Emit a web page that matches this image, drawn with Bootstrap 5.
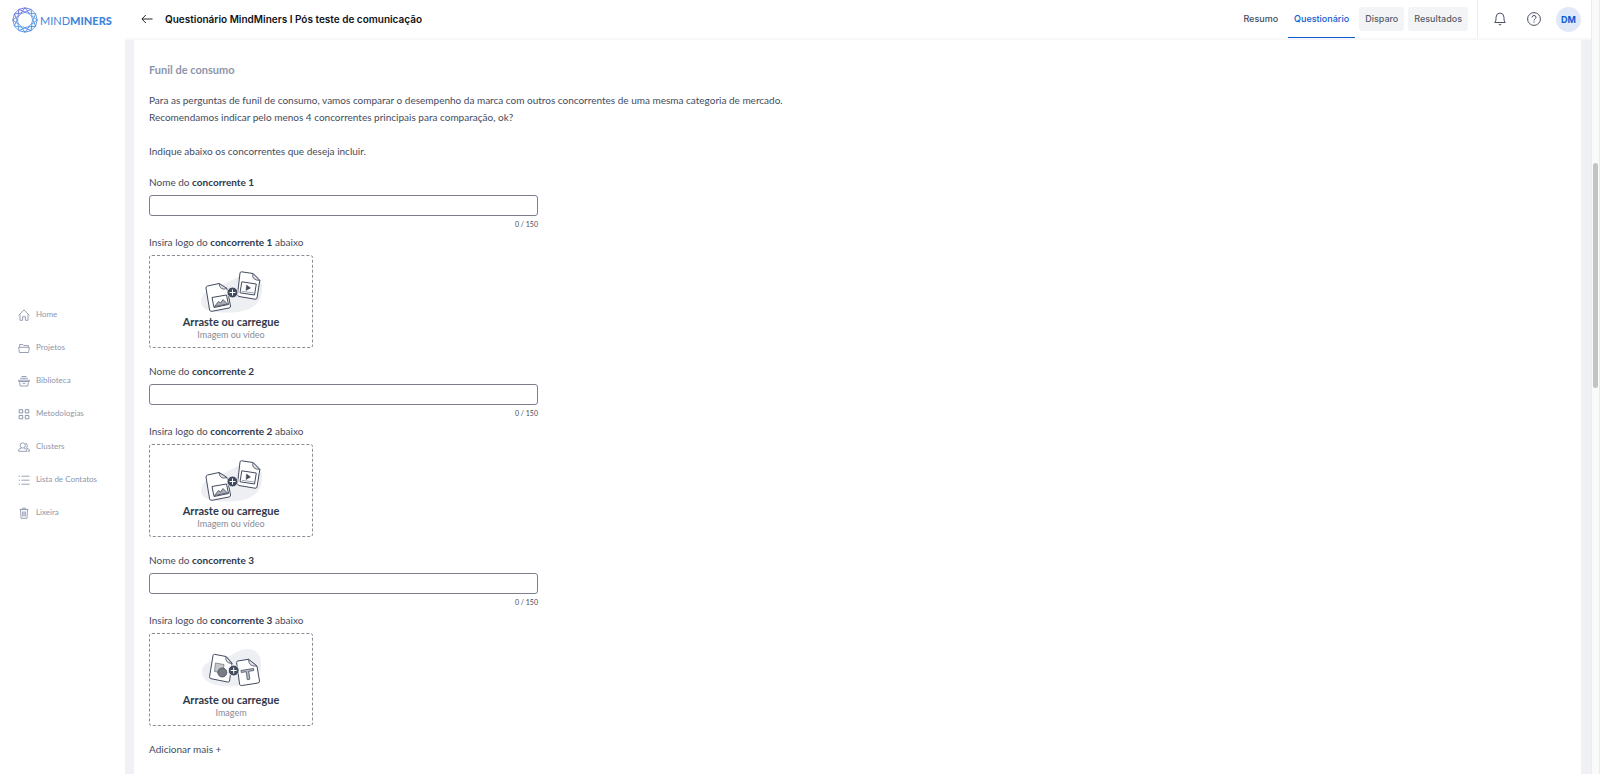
<!DOCTYPE html>
<html lang="pt-BR">
<head>
<meta charset="utf-8">
<meta name="viewport" content="width=device-width, initial-scale=1">
<title>Questionário MindMiners</title>
<link href="https://cdn.jsdelivr.net/npm/bootstrap@5.3.0/dist/css/bootstrap.min.css" rel="stylesheet">
<style>
  :root { --ink: #434b5e; --ink-strong: #2f384d; --soft: #8c96ab; --accent: #0d5bd1; --back: #f0f1f4; }
  body { font-family: Lato, sans-serif; font-size: 10px; line-height: 17px; color: var(--ink); background: var(--back); }
  a { text-decoration: none; }
  svg { display: block; flex: none; }
  .side { width: 125px; background: #fff; }
  .brand { height: 40px; padding-left: 12px; gap: 2px; font-size: 11px; color: #3f86dc; }
  .brand .thin { font-weight: 400; }
  .brand .thick { font-weight: 900; }
  .side-links { gap: 16px; padding: 12px 0 0 18px; }
  .side-links a { gap: 6px; font-size: 8px; color: var(--soft); }
  .side-links svg { width: 12px; height: 12px; }
  .topbar { height: 40px; background: #fff; border-bottom: 2px solid #f7f7f9; font-family: Inter, sans-serif; }
  .topbar h1 { font-size: 10px; line-height: 16px; font-weight: 600; color: #10131a; }
  .tabs { gap: 4px; padding-right: 9px; font-size: 9px; font-weight: 500; }
  .tabs a { padding: 0 6px; line-height: 24px; border-radius: 3px; color: var(--ink); }
  .tabs a.off { background: #f3f4f6; color: #565d6b; }
  .tabs a.on { line-height: 36px; border-bottom: 1px solid var(--accent); color: var(--accent); border-radius: 0; }
  .tools { border-left: 1px solid #ebedf0; padding: 0 10px 0 15px; }
  .tools button { background: none; border: 0; padding: 0; color: #4a5163; }
  .tools .help { margin: 0 15px 0 20px; }
  .tools .avatar { width: 25px; height: 25px; border-radius: 50%; background: #e1e9f8; color: var(--accent); font-size: 9px; font-weight: 700; }
  .sheet { margin: 0 10px 0 9px; padding: 21px 15px 18px; background: #fff; }
  .sheet h2 { font-size: 11px; line-height: 17px; font-weight: 700; color: var(--soft); margin-bottom: 14px; }
  .sheet p { margin: 0 0 17px; }
  .sheet .last-line { margin-bottom: 14px; }
  .sheet b { color: var(--ink-strong); }
  .entry { margin-bottom: 15px; }
  .entry-name label, .field-label { display: block; line-height: 16px; }
  .entry-name { width: 389px; max-width: 100%; }
  .entry-name .form-control { height: 21px; min-height: 0; margin-top: 5px; padding: 0 6px; font-size: 10px; border: 1px solid #7b7f8c; border-radius: 3px; }
  .counter { margin: 2px 0 4px; font-size: 7px; line-height: 12px; text-align: right; }
  .drop { width: 164px; height: 93px; margin-top: 5px; padding-top: 15px; border: 1px dashed #8a8d97; border-radius: 3px; cursor: pointer; }
  .drop strong { margin-top: 2px; line-height: 14px; font-size: 11px; color: var(--ink-strong); }
  .drop span { line-height: 12px; font-size: 9px; color: #858b99; }
  .more { display: block; background: none; border: 0; padding: 0; line-height: 16px; color: var(--ink); }
  .rail { width: 9px; background: #fafafa; border-left: 1px solid #ececec; border-right: 1px solid #ececec; }
  .rail-thumb { position: absolute; top: 21%; left: 1px; width: 5px; height: 29%; border-radius: 3px; background: #c3c3c3; }
</style>
</head>
<body>
<svg width="0" height="0" class="position-absolute" aria-hidden="true">
  <symbol id="art-media" viewBox="-1 0 62 42">
    <path d="M0 31C0 21 9 18 20 14 32 10 38 3 48 2 57 2 62 10 61 19 61 32 50 41 31 41.500 14 42 0 40 0 31Z" fill="#edeff3"/>
    <g fill="#fff" stroke="#434b5e" stroke-linejoin="round">
      <path d="M6.500 15 18 12.500 26 17.500 29.500 35Q29.700 36.500 28 37L11 40.300Q9 40.500 8.600 39L5 17Q5 15.500 6.500 15Z"/>
      <path d="M18 12.500Q19 20 26 17.500Z" fill="#dfe2e8" stroke-width=".8"/>
      <path d="M11 26.500 25.500 24 27.500 33.500 13 36.500Z"/>
      <path d="M13.500 35.500 17.500 30.500 19.500 32 22 28.500 26.500 33Z" fill="#a9adb5" stroke-width=".8"/>
      <path d="M40.500.800 52 2.500 58.800 9.500 56 27Q55.700 28.500 54 28.200L38 25.500Q36.300 25 36.500 23.500L39 2Q39.300.700 40.500.800Z"/>
      <path d="M52 2.500Q50 9 58.800 9.500Z" fill="#dfe2e8" stroke-width=".8"/>
      <path d="M40.800 10.800 55.300 13 53.500 24 39 21.800Z"/>
      <path d="M45.500 14 49.500 17 45 19.500Z" fill="#434b5e" stroke-width=".5"/>
      <path d="M41 20.300 53 22" stroke-width=".5"/>
    </g>
    <circle cx="31.500" cy="21.500" r="5.400" fill="#434b5e" stroke="#fff" stroke-width=".8"/>
    <path d="M28.500 21.500h6M31.500 18.500v6" stroke="#fff"/>
  </symbol>
  <symbol id="art-image" viewBox="-1 0 62 42">
    <path d="M1 22C1 15 8 12 21 10 32 7 36 0 47 0 57 0 61 9 60 18 59 31 46 37 28 37.500 11 37 1 32 1 22Z" fill="#edeff3"/>
    <g fill="#fff" stroke="#434b5e" stroke-linejoin="round">
      <path d="M13.500 5.300 25 7.500 31 14 28.500 32Q28.200 33.500 26.500 33L10 29.700Q8.300 29.300 8.600 27.500L12 6.500Q12.300 5.200 13.500 5.300Z"/>
      <path d="M25 7.500Q23.500 14 31 14.500Z" fill="#dfe2e8" stroke-width=".8"/>
      <path d="M14.500 14 23 15.500 22 24 13.500 22.500Z" fill="#c4c6ca" stroke="#777b84" stroke-width=".8"/>
      <circle cx="21.300" cy="23.500" r="4.500" fill="#777b82" stroke-width=".8"/>
      <path d="M36.800 12 47.500 10.300 56 17 58.500 32Q58.700 33.500 57 34L40.500 36.600Q39 36.700 38.600 35.200L35.600 13.500Q35.500 12.300 36.800 12Z"/>
      <path d="M47.500 10.300Q47.500 18 56 17Z" fill="#dfe2e8" stroke-width=".8"/>
      <path d="M40 21.500 52.500 19.500 52.800 21.500 47.700 22.300 48.800 30.200 46.300 30.600 45.200 22.700 40.300 23.500Z" fill="#b9bdc6" stroke-width=".8"/>
    </g>
    <circle cx="32.700" cy="21.500" r="5.400" fill="#434b5e" stroke="#fff" stroke-width=".8"/>
    <path d="M29.700 21.500h6M32.700 18.500v6" stroke="#fff"/>
  </symbol>
</svg>

<div class="d-flex min-vh-100">
  <aside class="side d-flex flex-column flex-shrink-0">
    <a href="#" class="brand d-flex align-items-center">
      <svg width="26" height="26" viewBox="0 0 26 26" fill="none" stroke="url(#g)" stroke-width=".9" aria-hidden="true">
        <defs><linearGradient id="g" gradientUnits="userSpaceOnUse" x1="4" y1="2" x2="20" y2="26"><stop stop-color="#6a5fd8"/><stop offset=".5" stop-color="#5a9be4"/><stop offset="1" stop-color="#3f7fe0"/></linearGradient></defs>
        <path d="M13 .800 19.100 2.400 23.600 6.900 25.200 13 23.600 19.100 19.100 23.600 13 25.200 6.900 23.600 2.400 19.100.800 13 2.400 6.900 6.900 2.400Z"/>
        <path d="M13 .800 17 6.100 23.600 6.900 21 13 23.600 19.100 17 19.900 13 25.200 9 19.900 2.400 19.100 5 13 2.400 6.900 9 6.100Z"/>
        <path d="M6.900 2.400 13 5 19.100 2.400 19.900 9 25.200 13 19.900 17 19.100 23.600 13 21 6.900 23.600 6.100 17 .800 13 6.100 9Z"/>
        <circle cx="13" cy="13" r="7.500"/>
      </svg>
      <span><span class="thin">MIND</span><span class="thick">MINERS</span></span>
    </a>
    <nav class="side-links d-flex flex-column flex-grow-1 justify-content-center" aria-label="Principal">
      <a href="#" class="d-flex align-items-center"><svg viewBox="0 0 12 12" fill="none" stroke="currentColor" stroke-width=".9"><path d="M.700 6.300 6 .900 11.300 6.300M2 5.300V11.300H4.600V7.700H7.400V11.300H10V5.300"/></svg>Home</a>
      <a href="#" class="d-flex align-items-center"><svg viewBox="0 0 12 12" fill="none" stroke="currentColor" stroke-width=".9"><path d="M1.600 5V2.500H4.800L5.800 3.600H10.400V5M.700 5.300H11.300L10.600 10.500H1.400Z"/></svg>Projetos</a>
      <a href="#" class="d-flex align-items-center"><svg viewBox="0 0 12 12" fill="none" stroke="currentColor" stroke-width=".9"><path d="M3.500 1.500H8.500M2.300 3.300H9.700M.700 5.200H11.300V6.500H.700ZM1.600 6.500 2.200 11H9.800L10.400 6.500M4.500 8.300H7.500"/></svg>Biblioteca</a>
      <a href="#" class="d-flex align-items-center"><svg viewBox="0 0 12 12" fill="none" stroke="currentColor"><path d="M1.200 1.700H4.700V5H1.200ZM7.300 1.700H10.800V5H7.300ZM1.200 7.500H4.700V10.800H1.200ZM7.300 7.500H10.800V10.800H7.300Z"/></svg>Metodologias</a>
      <a href="#" class="d-flex align-items-center"><svg viewBox="0 0 12 12" fill="none" stroke="currentColor" stroke-width=".9"><circle cx="4.700" cy="4.500" r="2.600"/><path d="M3.500 7 .700 8.500V10.300H8.700V8.500L6 7M7.300 2.500Q9.700 2.500 9.300 4.800 9.200 6.400 8.300 7L11.300 8.600V10.300H9.700"/></svg>Clusters</a>
      <a href="#" class="d-flex align-items-center"><svg viewBox="0 0 12 12" fill="none" stroke="currentColor" stroke-width=".9"><path d="M3.500 2.200H11.500M3.500 6.200H11.500M3.500 10.200H11.500M.800 2.200H2M.800 6.200H2M.800 10.200H2"/></svg>Lista de Contatos</a>
      <a href="#" class="d-flex align-items-center"><svg viewBox="0 0 12 12" fill="none" stroke="currentColor" stroke-width=".9"><path d="M1.500 2.500H10.500M4.300 2.500V1.200H7.700V2.500M2.500 2.500 3 11.300H9L9.500 2.500M4.700 4.500V9.500M6 4.500V9.500M7.300 4.500V9.500"/></svg>Lixeira</a>
    </nav>
  </aside>

  <div class="flex-grow-1 d-flex flex-column">
    <header class="topbar d-flex align-items-stretch">
      <div class="d-flex align-items-center flex-grow-1 ps-3">
        <a href="#" aria-label="Voltar" class="text-dark me-2"><svg width="12" height="12" viewBox="0 0 12 12" fill="none" stroke="currentColor"><path d="M11.500 6H1M4.800 2 .900 6 4.800 10"/></svg></a>
        <h1 class="mb-0 ps-1">Questionário MindMiners I Pós teste de comunicação</h1>
      </div>
      <nav class="tabs d-flex align-items-center" aria-label="Etapas">
        <a href="#">Resumo</a>
        <a href="#" class="on" aria-current="page">Questionário</a>
        <a href="#" class="off">Disparo</a>
        <a href="#" class="off">Resultados</a>
      </nav>
      <div class="tools d-flex align-items-center">
        <button type="button" aria-label="Notificações"><svg width="14" height="14" viewBox="0 0 14 14" fill="none" stroke="currentColor" stroke-linejoin="round"><path d="M1.700 10.500Q3 9.500 3 7V5.300Q3.200 1.200 7 1 10.800 1.200 11 5.300V7Q11 9.500 12.300 10.500ZM5.700 12.300Q7 13.700 8.300 12.300"/></svg></button>
        <button type="button" aria-label="Ajuda" class="help"><svg width="14" height="14" viewBox="0 0 14 14" fill="none" stroke="currentColor"><circle cx="7" cy="7" r="6.400"/><path d="M5 5.500Q5 3.500 7 3.500T9 5.300Q9 6.200 8 6.800T7 8.500M7 9.500V10.700"/></svg></button>
        <button type="button" class="avatar" aria-label="Conta de DM">DM</button>
      </div>
    </header>

    <main class="sheet flex-grow-1">
      <h2>Funil de consumo</h2>
      <p>Para as perguntas de funil de consumo, vamos comparar o desempenho da marca com outros concorrentes de uma mesma categoria de mercado.<br>Recomendamos indicar pelo menos 4 concorrentes principais para comparação, ok?</p>
      <p class="last-line">Indique abaixo os concorrentes que deseja incluir.</p>
      <form>
        <section class="entry">
          <div class="entry-name">
            <label for="nome1">Nome do <b>concorrente 1</b></label>
            <input id="nome1" type="text" class="form-control" maxlength="150">
            <div class="counter">0 / 150</div>
          </div>
          <div class="field-label" id="logo1-label">Insira logo do <b>concorrente 1</b> abaixo</div>
          <label class="drop d-flex flex-column align-items-center position-relative" for="logo1">
            <input id="logo1" type="file" class="visually-hidden" aria-labelledby="logo1-label">
            <svg width="62" height="42" aria-hidden="true"><use href="#art-media"/></svg>
            <strong>Arraste ou carregue</strong><span>Imagem ou vídeo</span>
          </label>
        </section>
        <section class="entry">
          <div class="entry-name">
            <label for="nome2">Nome do <b>concorrente 2</b></label>
            <input id="nome2" type="text" class="form-control" maxlength="150">
            <div class="counter">0 / 150</div>
          </div>
          <div class="field-label" id="logo2-label">Insira logo do <b>concorrente 2</b> abaixo</div>
          <label class="drop d-flex flex-column align-items-center position-relative" for="logo2">
            <input id="logo2" type="file" class="visually-hidden" aria-labelledby="logo2-label">
            <svg width="62" height="42" aria-hidden="true"><use href="#art-media"/></svg>
            <strong>Arraste ou carregue</strong><span>Imagem ou vídeo</span>
          </label>
        </section>
        <section class="entry">
          <div class="entry-name">
            <label for="nome3">Nome do <b>concorrente 3</b></label>
            <input id="nome3" type="text" class="form-control" maxlength="150">
            <div class="counter">0 / 150</div>
          </div>
          <div class="field-label" id="logo3-label">Insira logo do <b>concorrente 3</b> abaixo</div>
          <label class="drop d-flex flex-column align-items-center position-relative" for="logo3">
            <input id="logo3" type="file" class="visually-hidden" aria-labelledby="logo3-label">
            <svg width="62" height="42" aria-hidden="true"><use href="#art-image"/></svg>
            <strong>Arraste ou carregue</strong><span>Imagem</span>
          </label>
        </section>
        <button type="button" class="more">Adicionar mais +</button>
      </form>
    </main>
  </div>
  <div class="rail flex-shrink-0 position-relative" aria-hidden="true"><div class="rail-thumb"></div></div>
</div>
<script src="https://cdn.jsdelivr.net/npm/bootstrap@5.3.0/dist/js/bootstrap.bundle.min.js"></script>
</body>
</html>
